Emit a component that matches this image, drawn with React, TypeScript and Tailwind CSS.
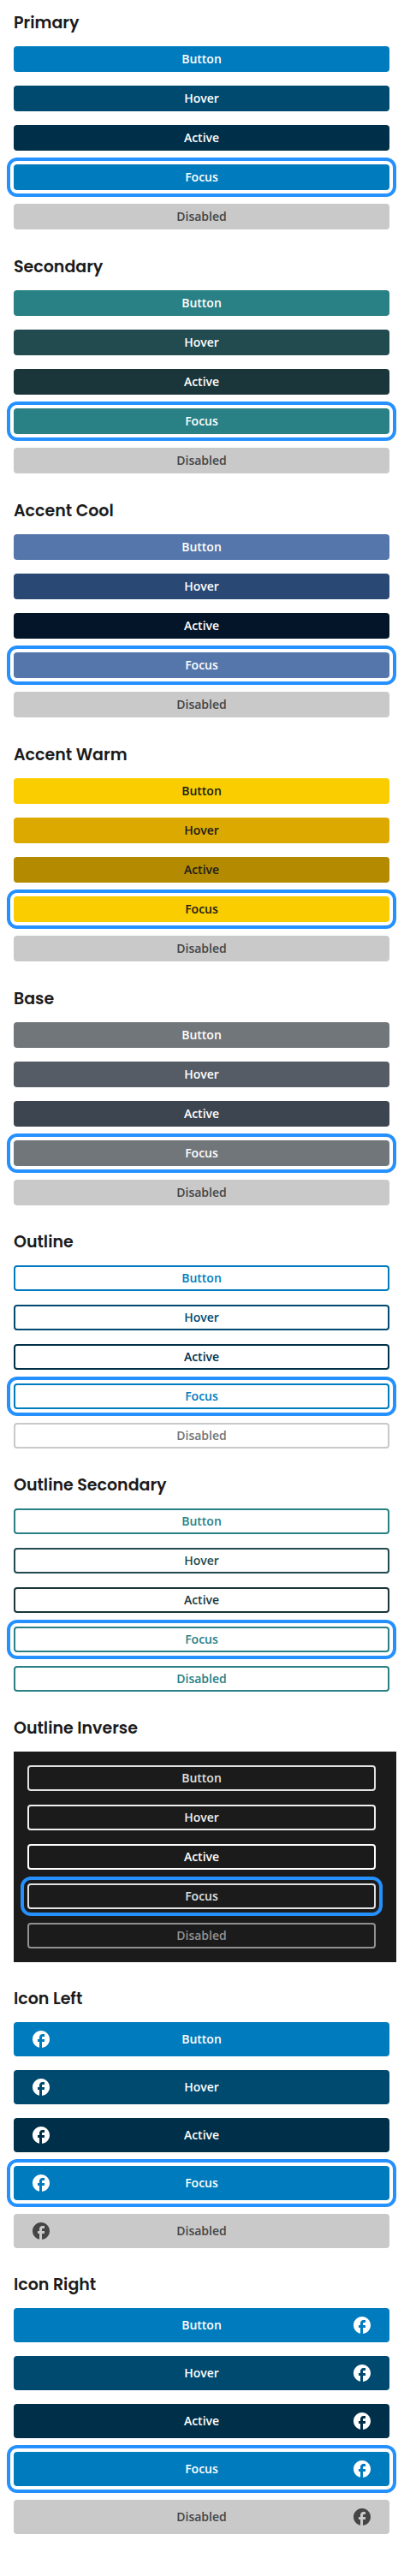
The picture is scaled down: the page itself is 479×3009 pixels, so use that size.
import { MdFacebook } from "react-icons/md";
import { clsx } from "clsx";

type State = "Button" | "Hover" | "Active" | "Focus" | "Disabled";
type Palette = Record<State, string>;
type IconSide = "left" | "right";

const states: State[] = ["Button", "Hover", "Active", "Focus", "Disabled"];

const disabledFill = "bg-[#c9c9c9] text-[#454545]";

const primary: Palette = {
  Button: "bg-[#007bbd] text-white",
  Hover: "bg-[#004a70] text-white",
  Active: "bg-[#003049] text-white",
  Focus: "bg-[#007bbd] text-white",
  Disabled: disabledFill,
};

const secondary: Palette = {
  Button: "bg-[#298085] text-white",
  Hover: "bg-[#224b4f] text-white",
  Active: "bg-[#1a363a] text-white",
  Focus: "bg-[#298085] text-white",
  Disabled: disabledFill,
};

const accentCool: Palette = {
  Button: "bg-[#5476aa] text-white",
  Hover: "bg-[#294873] text-white",
  Active: "bg-[#051529] text-white",
  Focus: "bg-[#5476aa] text-white",
  Disabled: disabledFill,
};

const accentWarm: Palette = {
  Button: "bg-[#facd00] text-[#1b1b1b]",
  Hover: "bg-[#dca900] text-[#1b1b1b]",
  Active: "bg-[#b38a00] text-[#1b1b1b]",
  Focus: "bg-[#facd00] text-[#1b1b1b]",
  Disabled: disabledFill,
};

const base: Palette = {
  Button: "bg-[#71767a] text-white",
  Hover: "bg-[#565c65] text-white",
  Active: "bg-[#3d4551] text-white",
  Focus: "bg-[#71767a] text-white",
  Disabled: disabledFill,
};

const outline: Palette = {
  Button: "border-2 border-[#007bbd] text-[#007bbd]",
  Hover: "border-2 border-[#004a70] text-[#004a70]",
  Active: "border-2 border-[#003049] text-[#003049]",
  Focus: "border-2 border-[#007bbd] text-[#007bbd]",
  Disabled: "border-2 border-[#c9c9c9] text-[#757575]",
};

const outlineSecondary: Palette = {
  Button: "border-2 border-[#298085] text-[#298085]",
  Hover: "border-2 border-[#224b4f] text-[#224b4f]",
  Active: "border-2 border-[#1a363a] text-[#1a363a]",
  Focus: "border-2 border-[#298085] text-[#298085]",
  Disabled: "border-2 border-[#298085] text-[#298085]",
};

const outlineInverse: Palette = {
  Button: "border-2 border-[#dfe1e2] text-[#dfe1e2]",
  Hover: "border-2 border-[#f0f0f0] text-[#f0f0f0]",
  Active: "border-2 border-white text-white",
  Focus: "border-2 border-[#dfe1e2] text-[#dfe1e2]",
  Disabled: "border-2 border-[#919191] text-[#919191]",
};

function StateButton({ state, palette, icon }: { state: State; palette: Palette; icon?: IconSide }) {
  return (
    <button
      type="button"
      disabled={state === "Disabled"}
      className={clsx(
        "rounded text-center text-sm font-semibold leading-[18px]",
        icon ? "grid h-10 grid-cols-[24px_1fr_24px] items-center px-5" : "h-[30px] px-5",
        state === "Focus" && "outline-4 outline-offset-4 outline-[#2491ff]",
        palette[state],
      )}
    >
      {icon === "left" && <MdFacebook size={24} aria-hidden="true" />}
      {icon ? <span className="col-start-2">{state}</span> : state}
      {icon === "right" && <MdFacebook size={24} aria-hidden="true" />}
    </button>
  );
}

function Section({
  title,
  palette,
  icon,
  inverse,
}: {
  title: string;
  palette: Palette;
  icon?: IconSide;
  inverse?: boolean;
}) {
  return (
    <section className="flex flex-col gap-4">
      <h2 className="font-['Poppins','Inter',sans-serif] text-[19px] font-semibold leading-[22px]">{title}</h2>
      <div className={clsx("flex flex-col gap-4", inverse ? "bg-[#1b1b1b] py-4 pr-6 pl-4" : "pr-2")}>
        {states.map((state) => (
          <StateButton key={state} state={state} palette={palette} icon={icon} />
        ))}
      </div>
    </section>
  );
}

export default function App() {
  return (
    <main className="flex flex-col gap-8 bg-white px-4 pt-4 pb-12 font-['Open_Sans','Noto_Sans',sans-serif] text-[#1b1b1b]">
      <div className="flex flex-col gap-[33px]">
        <Section title="Primary" palette={primary} />
        <Section title="Secondary" palette={secondary} />
        <Section title="Accent Cool" palette={accentCool} />
        <Section title="Accent Warm" palette={accentWarm} />
        <Section title="Base" palette={base} />
      </div>
      <div className="flex flex-col gap-8">
        <Section title="Outline" palette={outline} />
        <Section title="Outline Secondary" palette={outlineSecondary} />
        <Section title="Outline Inverse" palette={outlineInverse} inverse />
      </div>
      <div className="flex flex-col gap-8">
        <Section title="Icon Left" palette={primary} icon="left" />
        <Section title="Icon Right" palette={primary} icon="right" />
      </div>
    </main>
  );
}
